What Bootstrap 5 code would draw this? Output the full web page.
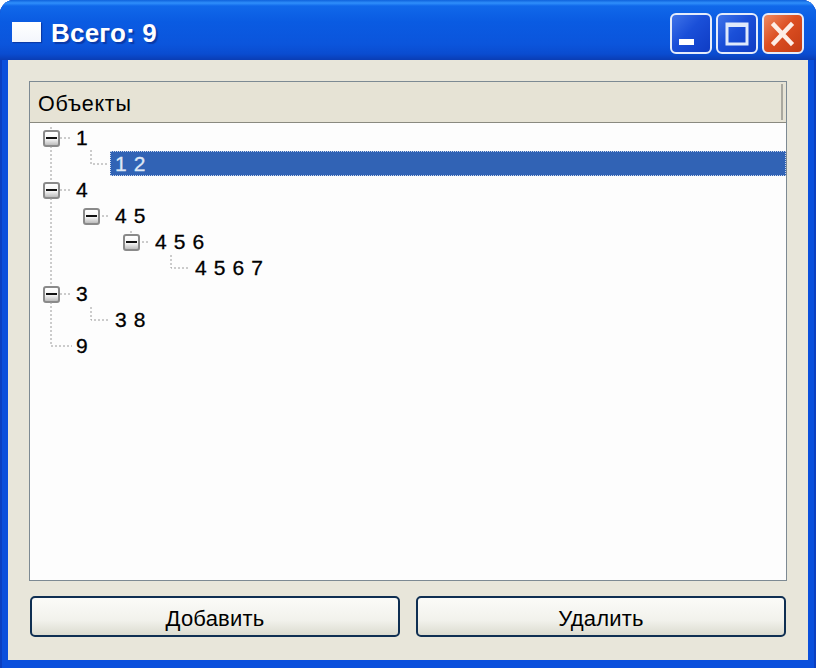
<!DOCTYPE html>
<html lang="ru">
<head>
    <meta charset="UTF-8">
    <meta name="viewport" content="width=device-width, initial-scale=1">
    <title>Всего: 9</title>
    <link href="https://cdn.jsdelivr.net/npm/bootstrap@5.3.0/dist/css/bootstrap.min.css" rel="stylesheet">
    <style>
        html, body { height: 668px; overflow: hidden; background: #fff; }
        body { font-family: "Liberation Sans", Arial, sans-serif; color: #000; }
        .xp-window {
            height: 668px;
            border-radius: 14px 14px 0 0;
            background: #0a4fdc;
            box-shadow: inset 2px 0 0 #0a3fc0, inset -2px 0 0 #0a3fc0;
        }
        .xp-title {
            height: 60px;
            padding: 6px 12px 0 12px;
            border-radius: 14px 14px 0 0;
            background: linear-gradient(180deg, #0f62dc 0, #2f8ffb 3px, #1068ea 6px, #0a5be2 22px, #0b55dc 44px, #0a4cd0 54px, #0a3db4 60px);
        }
        .xp-sysicon {
            width: 29px; height: 20px; margin-right: 10px; margin-top: -2px;
            background: linear-gradient(180deg, #fff 0, #f3f6fc 100%);
            box-shadow: 1px 1px 1px #0a3aa8;
        }
        .xp-caption {
            font-size: 26px; font-weight: 700; line-height: 1; color: #fff;
            letter-spacing: .2px;
            text-shadow: 2px 2px 1px #0a3aa8;
        }
        .xp-ctl {
            width: 42px; height: 41px; padding: 0;
            border: 2px solid #e4ecfb; border-radius: 6px;
            background: linear-gradient(135deg, #3f74ea 0, #1a4fd8 45%, #0f3cc4 100%);
        }
        .xp-ctl svg { display: block; }
        .xp-ctl-close { background: linear-gradient(135deg, #ee8a62 0, #dc4f22 45%, #c43c14 100%); }
        .xp-client { margin: 0 8px 8px; padding: 21px 21px 23px; background: #e8e6da; }
        .xp-tree { border: 1px solid #7d8a93; background: #fdfdfd; min-height: 0; }
        .xp-tree-head {
            height: 41px; padding: 0 3px 0 8px;
            background: #e6e3d5; border-bottom: 1px solid #8a8a80;
            font-size: 21.5px; letter-spacing: .7px;
        }
        .xp-tree-title { padding-top: 5px; }
        .xp-tree-sep { width: 2px; height: 36px; background: #a9a89f; }
        .xp-tree-body { padding-top: 2px; }
        .xp-tree-lines { top: 0; left: 0; }
        .xp-row { height: 26px; font-size: 21px; word-spacing: 1.2px; -webkit-text-stroke: .3px currentColor; }
        .xp-lvl-0 { padding-left: 13px; }
        .xp-lvl-1 { padding-left: 53px; }
        .xp-lvl-2 { padding-left: 93px; }
        .xp-lvl-3 { padding-left: 133px; }
        .xp-slot { width: 27px; }
        .xp-slot-top { width: 33px; }
        .xp-toggle {
            width: 17px; height: 17px;
            border: 2px solid #8a8a8a; border-radius: 3px;
            background: linear-gradient(180deg, #fff 0, #f4f4f4 55%, #bdbdbd 100%);
        }
        .xp-minus { width: 11px; height: 2px; background: #111; }
        .xp-label { padding-left: 5px; height: 26px; }
        .xp-selected {
            height: 25px;
            background: #3163b5; color: #dfe8f6;
            outline: 1px dotted #c9d6ec; outline-offset: -1px;
        }
        .xp-btn {
            height: 41px; padding: 3px 0 0;
            border: 2px solid #0f2f52; border-radius: 5px;
            background: linear-gradient(180deg, #fbfbf8 0, #f2f2ec 60%, #dcdcd0 100%);
            font-size: 22px; color: #000; letter-spacing: .2px;
        }
        .xp-btn:hover { background: linear-gradient(180deg, #fbfbf8 0, #f2f2ec 60%, #dcdcd0 100%); color: #000; border-color: #0f2f52; }
        .xp-btns { padding: 0 1px; margin-top: 15px; gap: 16px; }
    </style>
</head>
<body class="m-0">
    <div class="xp-window d-flex flex-column">
        <div class="xp-title d-flex align-items-center flex-shrink-0">
            <div class="xp-sysicon"></div>
            <div class="xp-caption flex-grow-1">Всего: 9</div>
            <div class="d-flex gap-1">
                <button class="xp-ctl" type="button" aria-label="Свернуть">
                    <svg width="38" height="37" viewBox="0 0 38 37"><rect x="7" y="24" width="15" height="6" fill="#fff"/></svg>
                </button>
                <button class="xp-ctl" type="button" aria-label="Развернуть">
                    <svg width="38" height="37" viewBox="0 0 38 37"><rect x="9" y="9" width="20" height="20" fill="none" stroke="#dfe9fb" stroke-width="3"/><rect x="8" y="8" width="22" height="4" fill="#dfe9fb"/></svg>
                </button>
                <button class="xp-ctl xp-ctl-close" type="button" aria-label="Закрыть">
                    <svg width="38" height="37" viewBox="0 0 38 37"><path d="M10 10 L27 28 M27 10 L10 28" stroke="#fdeee6" stroke-width="4.5" stroke-linecap="square" fill="none"/></svg>
                </button>
            </div>
        </div>
        <div class="xp-client d-flex flex-column flex-grow-1">
            <div class="xp-tree d-flex flex-column flex-grow-1">
                <div class="xp-tree-head d-flex align-items-center justify-content-between flex-shrink-0">
                    <span class="xp-tree-title">Объекты</span>
                    <span class="xp-tree-sep"></span>
                </div>
                <div class="xp-tree-body position-relative flex-grow-1">
                    <div id="tree"></div>
                    <!-- coordinates are relative to the tree body: x-30, y-123 -->
                    <svg class="xp-tree-lines position-absolute" width="200" height="240" fill="none" stroke="#9a9a9a" stroke-width="1" stroke-dasharray="2 2">
                        <path d="M21 4V7M21 23V59M21 75V163M21 179V223H42"/>
                        <path d="M30 15H42M30 67H42M30 171H42"/>
                        <path d="M61 27V41H78M61 184V197H78"/>
                        <path d="M72 93H78"/>
                        <path d="M101 108V111M112 119H118"/>
                        <path d="M141 132V145H158"/>
                    </svg>
                </div>
            </div>
            <div class="xp-btns d-flex flex-shrink-0">
                <button class="btn xp-btn flex-fill w-50" type="button">Добавить</button>
                <button class="btn xp-btn flex-fill w-50" type="button">Удалить</button>
            </div>
        </div>
    </div>
    <script>
        const nodes = [
            { label: "1", level: 0, open: true },
            { label: "1 2", level: 1, selected: true },
            { label: "4", level: 0, open: true },
            { label: "4 5", level: 1, open: true },
            { label: "4 5 6", level: 2, open: true },
            { label: "4 5 6 7", level: 3 },
            { label: "3", level: 0, open: true },
            { label: "3 8", level: 1 },
            { label: "9", level: 0 }
        ];
        // leaves have no toggle, the slot stays empty so the label keeps its column
        document.getElementById("tree").innerHTML = nodes.map(n => `<div class="xp-row xp-lvl-${n.level} d-flex align-items-center">
            <div class="xp-slot${n.level === 0 ? " xp-slot-top" : ""} flex-shrink-0">
                ${n.open ? '<div class="xp-toggle d-flex align-items-center justify-content-center"><div class="xp-minus"></div></div>' : ""}
            </div>
            ${n.selected
                ? `<div class="xp-label xp-selected flex-grow-1 d-flex align-items-center align-self-start">${n.label}</div>`
                : `<div class="${n.level === 0 ? "" : "xp-label"} d-flex align-items-center">${n.label}</div>`}
        </div>`).join("");
    </script>
    <script src="https://cdn.jsdelivr.net/npm/bootstrap@5.3.0/dist/js/bootstrap.bundle.min.js"></script>
</body>
</html>
